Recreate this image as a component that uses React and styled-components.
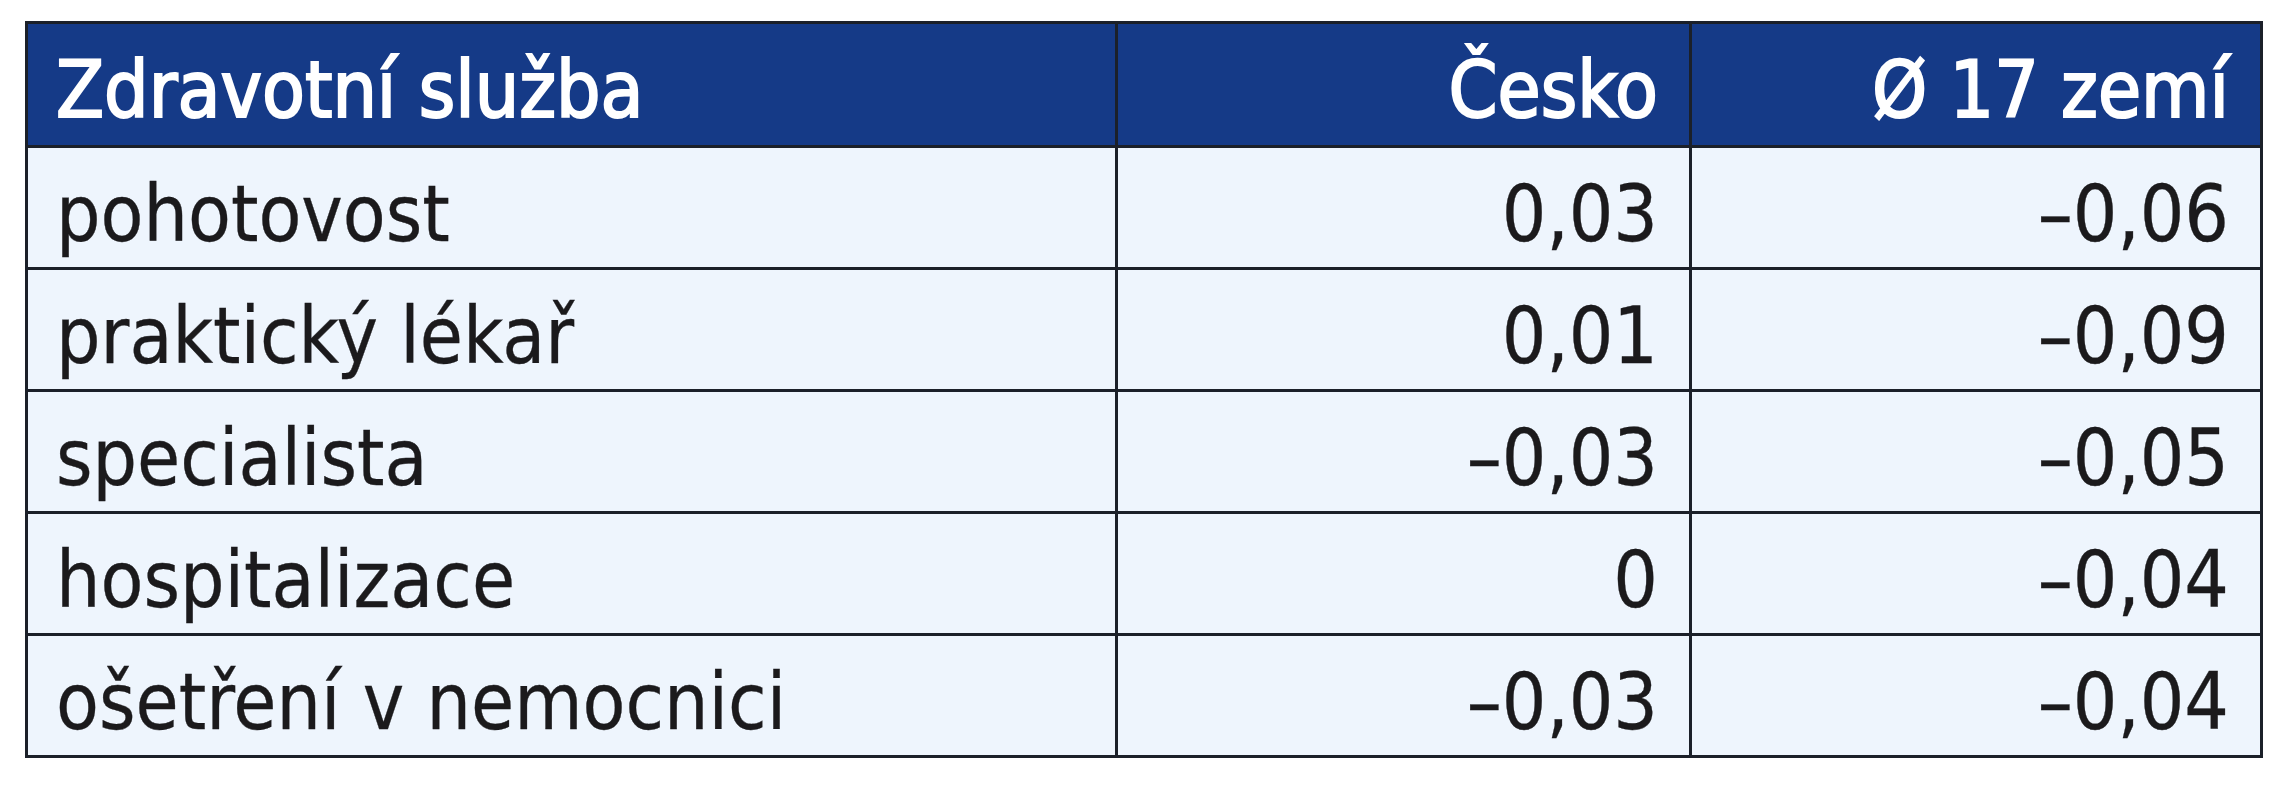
import React from 'react';
import styled, { createGlobalStyle } from 'styled-components';

const GlobalStyle = createGlobalStyle`
  html, body {
    margin: 0;
    padding: 0;
    background: #ffffff;
  }
  body {
    font-family: "DejaVu Sans Condensed", "DejaVu Sans", sans-serif;
    font-stretch: semi-condensed;
  }
`;

const Page = styled.div`
  padding: 21px 0 0 25px;
`;

const Grid = styled.div`
  display: grid;
  grid-template-columns: 1090px 574px 571px;
  grid-auto-rows: 122px;
  grid-template-rows: 124px;
  border-top: 3px solid #1b2029;
  border-left: 3px solid #1b2029;
  width: max-content;
`;

const Cell = styled.div`
  box-sizing: border-box;
  display: flex;
  align-items: center;
  justify-content: ${(p) => (p.$num ? 'flex-end' : 'flex-start')};
  padding: 12px ${(p) => (p.$num ? '31px' : '0')} 0 ${(p) => (p.$num ? '0' : '28px')};
  border-right: 3px solid #1b2029;
  border-bottom: 3px solid #1b2029;
  background: #eef5fd;
  color: #1b1a1c;
  font-size: 78px;
  white-space: nowrap;
  -webkit-text-stroke: 0.3px #1b1a1c;
`;

const HeadCell = styled(Cell)`
  background: #153a87;
  color: #ffffff;
  padding-top: 10px;
  -webkit-text-stroke: 2px #ffffff;
`;

const rows = [
  ['pohotovost', '0,03', '–0,06'],
  ['praktický lékař', '0,01', '–0,09'],
  ['specialista', '–0,03', '–0,05'],
  ['hospitalizace', '0', '–0,04'],
  ['ošetření v nemocnici', '–0,03', '–0,04'],
];

const App = () => {
  return (
    <Page>
      <GlobalStyle />
      <Grid role="table">
        <HeadCell role="columnheader">Zdravotní služba</HeadCell>
        <HeadCell role="columnheader" $num>Česko</HeadCell>
        <HeadCell role="columnheader" $num>Ø 17 zemí</HeadCell>
        {rows.map((r) => (
          <React.Fragment key={r[0]}>
            <Cell role="cell">{r[0]}</Cell>
            <Cell role="cell" $num>{r[1]}</Cell>
            <Cell role="cell" $num>{r[2]}</Cell>
          </React.Fragment>
        ))}
      </Grid>
    </Page>
  );
};

export default App;
